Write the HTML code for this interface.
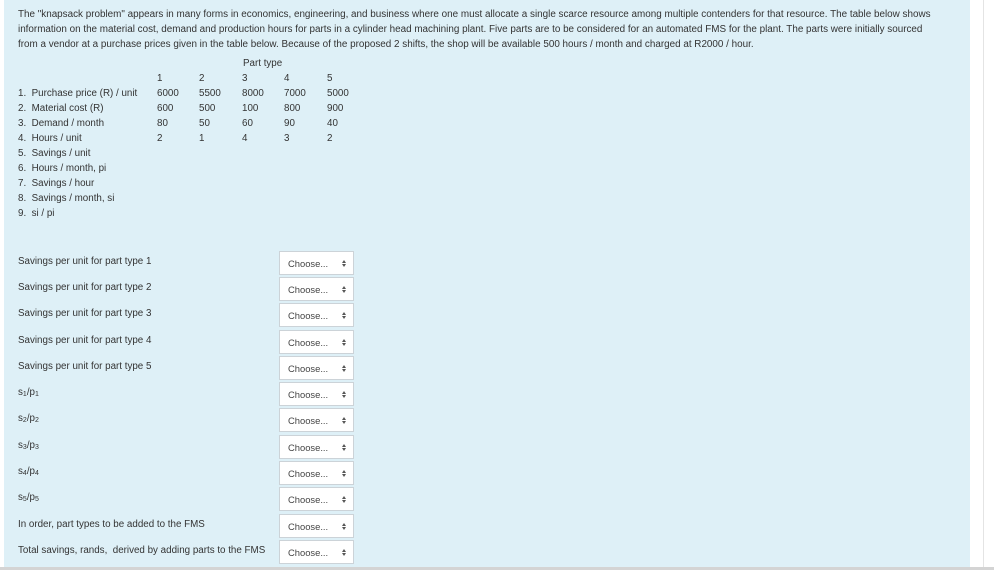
<!DOCTYPE html>
<html><head><meta charset="utf-8"><style>
body{margin:0;width:994px;height:570px;background:#fff;font-family:"Liberation Sans",sans-serif;color:#333;position:relative;overflow:hidden}
.panel{position:absolute;left:4px;top:0;width:966px;height:568px;background:#def0f7}
.vl{position:absolute;left:983px;top:0;width:1px;height:570px;background:#e4e4e4}
.bb{position:absolute;left:0;top:567px;width:994px;height:3px;background:#d4d4d4}
.t{position:absolute;font-size:9.8px;white-space:nowrap;line-height:15px;margin-top:1px}
.p{font-size:9.9px}
.sel{position:absolute;left:279px;width:75px;height:24px;background:#fff;border:1px solid #ccd3d8;box-sizing:border-box;font-size:9.4px;line-height:23px;padding-left:8px;color:#444}
.sel:after{content:"";position:absolute;left:62px;top:8px;width:0;height:0;border-left:2px solid transparent;border-right:2px solid transparent;border-bottom:3px solid #555}
.sel:before{content:"";position:absolute;left:62px;top:12px;width:0;height:0;border-left:2px solid transparent;border-right:2px solid transparent;border-top:3px solid #555}
sub{font-size:7px;vertical-align:-1px}
</style></head><body>
<div class="panel"></div><div class="vl"></div><div class="bb"></div>
<div class="t p" style="left:18px;top:6px">The "knapsack problem" appears in many forms in economics, engineering, and business where one must allocate a single scarce resource among multiple contenders for that resource. The table below shows</div>
<div class="t p" style="left:18px;top:21px">information on the material cost, demand and production hours for parts in a cylinder head machining plant. Five parts are to be considered for an automated FMS for the plant. The parts were initially sourced</div>
<div class="t p" style="left:18px;top:36px">from a vendor at a purchase prices given in the table below. Because of the proposed 2 shifts, the shop will be available 500 hours / month and charged at R2000 / hour.</div>
<div class="t" style="left:243px;top:55px">Part type</div>
<div class="t" style="left:157px;top:70px">1</div><div class="t" style="left:199px;top:70px">2</div><div class="t" style="left:242px;top:70px">3</div><div class="t" style="left:284px;top:70px">4</div><div class="t" style="left:327px;top:70px">5</div>
<div class="t" style="left:18px;top:85px">1. &nbsp;Purchase price (R) / unit</div><div class="t" style="left:157px;top:85px">6000</div><div class="t" style="left:199px;top:85px">5500</div><div class="t" style="left:242px;top:85px">8000</div><div class="t" style="left:284px;top:85px">7000</div><div class="t" style="left:327px;top:85px">5000</div>
<div class="t" style="left:18px;top:100px">2. &nbsp;Material cost (R)</div><div class="t" style="left:157px;top:100px">600</div><div class="t" style="left:199px;top:100px">500</div><div class="t" style="left:242px;top:100px">100</div><div class="t" style="left:284px;top:100px">800</div><div class="t" style="left:327px;top:100px">900</div>
<div class="t" style="left:18px;top:115px">3. &nbsp;Demand / month</div><div class="t" style="left:157px;top:115px">80</div><div class="t" style="left:199px;top:115px">50</div><div class="t" style="left:242px;top:115px">60</div><div class="t" style="left:284px;top:115px">90</div><div class="t" style="left:327px;top:115px">40</div>
<div class="t" style="left:18px;top:130px">4. &nbsp;Hours / unit</div><div class="t" style="left:157px;top:130px">2</div><div class="t" style="left:199px;top:130px">1</div><div class="t" style="left:242px;top:130px">4</div><div class="t" style="left:284px;top:130px">3</div><div class="t" style="left:327px;top:130px">2</div>
<div class="t" style="left:18px;top:145px">5. &nbsp;Savings / unit</div>
<div class="t" style="left:18px;top:160px">6. &nbsp;Hours / month, pi</div>
<div class="t" style="left:18px;top:175px">7. &nbsp;Savings / hour</div>
<div class="t" style="left:18px;top:190px">8. &nbsp;Savings / month, si</div>
<div class="t" style="left:18px;top:205px">9. &nbsp;si / pi</div>

<div class="t" style="left:18px;top:253px">Savings per unit for part type 1</div><div class="sel" style="top:251px">Choose...</div>
<div class="t" style="left:18px;top:279px">Savings per unit for part type 2</div><div class="sel" style="top:277px">Choose...</div>
<div class="t" style="left:18px;top:305px">Savings per unit for part type 3</div><div class="sel" style="top:303px">Choose...</div>
<div class="t" style="left:18px;top:332px">Savings per unit for part type 4</div><div class="sel" style="top:330px">Choose...</div>
<div class="t" style="left:18px;top:358px">Savings per unit for part type 5</div><div class="sel" style="top:356px">Choose...</div>
<div class="t" style="left:18px;top:384px">s<sub>1</sub>/p<sub>1</sub></div><div class="sel" style="top:382px">Choose...</div>
<div class="t" style="left:18px;top:410px">s<sub>2</sub>/p<sub>2</sub></div><div class="sel" style="top:408px">Choose...</div>
<div class="t" style="left:18px;top:437px">s<sub>3</sub>/p<sub>3</sub></div><div class="sel" style="top:435px">Choose...</div>
<div class="t" style="left:18px;top:463px">s<sub>4</sub>/p<sub>4</sub></div><div class="sel" style="top:461px">Choose...</div>
<div class="t" style="left:18px;top:489px">s<sub>5</sub>/p<sub>5</sub></div><div class="sel" style="top:487px">Choose...</div>
<div class="t" style="left:18px;top:516px">In order, part types to be added to the FMS</div><div class="sel" style="top:514px">Choose...</div>
<div class="t" style="left:18px;top:542px">Total savings, rands, &nbsp;derived by adding parts to the FMS</div><div class="sel" style="top:540px">Choose...</div>
</body></html>
